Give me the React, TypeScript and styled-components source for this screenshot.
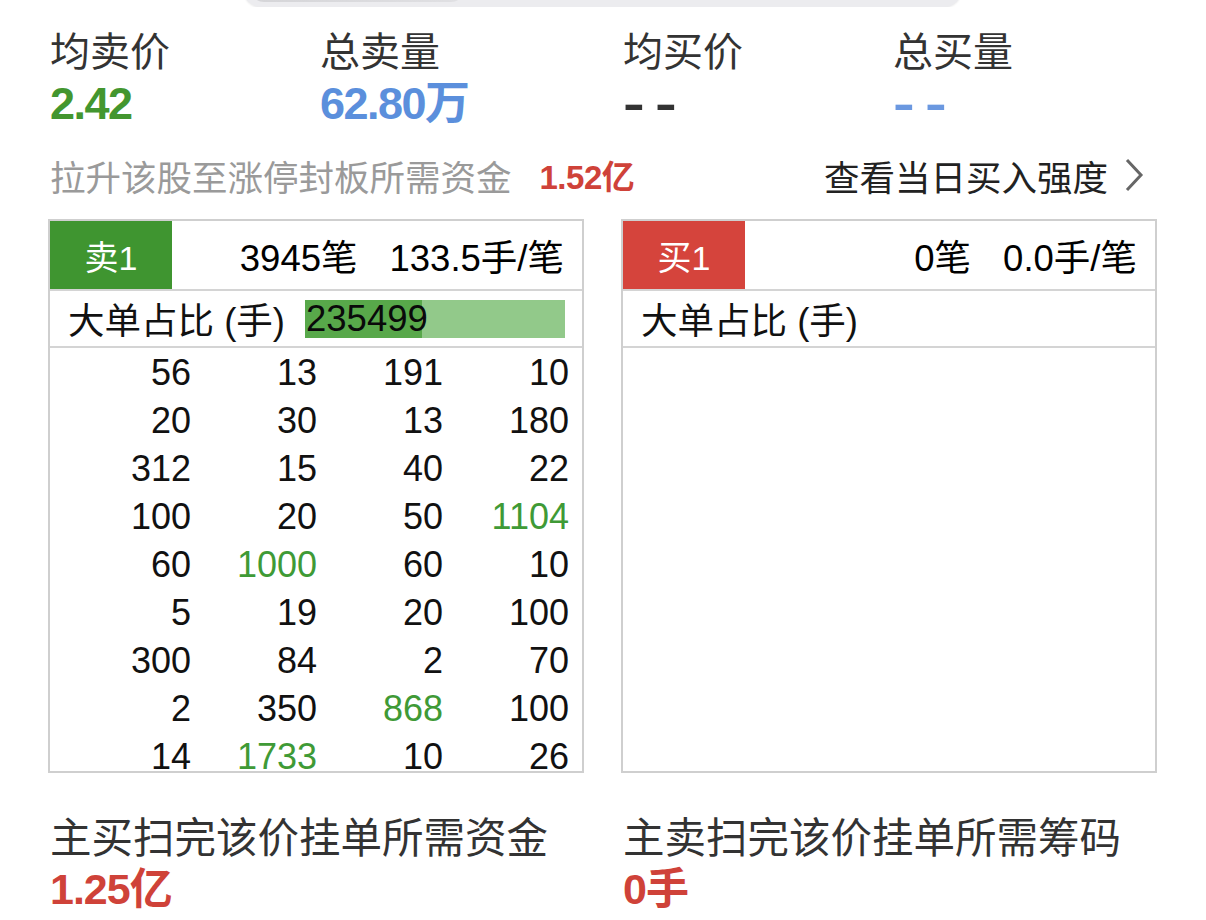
import React from "react";
import styled, { createGlobalStyle } from "styled-components";

const GlobalStyle = createGlobalStyle`
  html, body { margin: 0; padding: 0; background: #fff; }
  body {
    font-family: "Liberation Sans", "Noto Sans CJK SC", sans-serif;
    color: #111;
    overflow: hidden;
  }
  * { box-sizing: border-box; }
`;

const Page = styled.div`
  width: 1206px;
  height: 920px;
  padding: 0 48px;
  display: flex;
  flex-direction: column;
`;

const TabStrip = styled.div`
  height: 7px;
  display: flex;
  align-items: flex-end;
  overflow: hidden;
  padding-left: 195px;
`;

const TabPill = styled.div`
  width: 719px;
  height: 40px;
  flex-shrink: 0;
  border-radius: 18px;
  background: #ececef;
  box-shadow: 0 1px 2px rgba(0, 0, 0, 0.08);
  padding: 0 0 5px 7px;
  display: flex;
  align-items: flex-end;
`;

const TabActive = styled.div`
  width: 215px;
  height: 30px;
  border-radius: 14px;
  background: linear-gradient(90deg, #d5d5d8, #e0e0e3);
`;

const Halves = styled.div<{ $top?: number }>`
  display: grid;
  grid-template-columns: 536px 536px;
  column-gap: 37px;
  margin-top: ${(p) => p.$top ?? 0}px;
`;

const MetricPair = styled.div`
  display: grid;
  grid-template-columns: 270px 1fr;
  padding-left: 2px;
`;

const Metric = styled.div`
  display: flex;
  flex-direction: column;
`;

const MetricLabel = styled.div`
  font-family: "Noto Sans CJK SC", sans-serif;
  font-size: 40px;
  line-height: 48px;
  color: #333;
  margin-top: 18px;
`;

const MetricValue = styled.div<{ $color: string }>`
  font-family: "Liberation Sans", "Noto Sans CJK SC", sans-serif;
  font-weight: 700;
  font-size: 45px;
  line-height: 52px;
  letter-spacing: -1.5px;
  color: ${(p) => p.$color};
  margin-top: 5px;
  white-space: nowrap;
`;

const Dashes = styled.span`
  display: inline-block;
  letter-spacing: 7px;
  transform: scaleX(1.45);
  transform-origin: left center;
`;

const LiftRow = styled.div`
  display: flex;
  align-items: center;
  height: 50px;
  margin-top: 20px;
  padding-left: 2px;
`;

const LiftLabel = styled.span`
  font-family: "Noto Sans CJK SC", sans-serif;
  font-size: 35.5px;
  color: #9a9a9a;
`;

const LiftValue = styled.span`
  font-size: 33px;
  font-weight: 700;
  color: #cf4239;
  margin-left: 28px;
  letter-spacing: -0.5px;
`;

const StrengthLink = styled.span`
  margin-left: auto;
  margin-right: 14px;
  display: flex;
  align-items: center;
  gap: 16px;
  font-family: "Noto Sans CJK SC", sans-serif;
  font-size: 35.5px;
  color: #222;
`;

const Table = styled.div`
  height: 554px;
  border: 2px solid #cfcfcf;
  display: flex;
  flex-direction: column;
`;

const HeadRow = styled.div`
  height: 70px;
  border-bottom: 2px solid #d4d4d4;
  display: flex;
  align-items: stretch;
  flex-shrink: 0;
`;

const Badge = styled.div<{ $bg: string }>`
  width: 122px;
  background: ${(p) => p.$bg};
  color: #fff;
  font-size: 34px;
  display: flex;
  align-items: center;
  justify-content: center;
`;

const HeadStats = styled.div`
  flex: 1;
  display: flex;
  align-items: center;
  justify-content: flex-end;
  gap: 32px;
  padding-right: 18px;
  font-size: 36.5px;
  color: #000;
  white-space: nowrap;
`;

const BigRow = styled.div`
  height: 57px;
  border-bottom: 2px solid #d4d4d4;
  display: flex;
  align-items: center;
  padding: 0 17px 0 18px;
  flex-shrink: 0;
`;

const BigLabel = styled.span`
  font-size: 36.5px;
  color: #111;
  white-space: nowrap;
`;

const Bar = styled.div`
  margin-left: auto;
  width: 260px;
  height: 38px;
  background: #92c98a;
  position: relative;
  display: flex;
  align-items: center;
`;

const BarFill = styled.div`
  position: absolute;
  left: 0;
  top: 0;
  bottom: 0;
  background: #58a84a;
`;

const BarText = styled.span`
  position: relative;
  font-size: 36.5px;
  color: #0a0a0a;
  padding-left: 1px;
`;

const Grid = styled.div`
  flex: 1;
  padding: 1px 18px 0 15px;
  display: grid;
  grid-template-columns: repeat(4, 126px);
  grid-auto-rows: 48px;
  align-content: start;
`;

const Cell = styled.div<{ $green?: boolean }>`
  align-self: center;
  font-size: 36px;
  line-height: 30px;
  text-align: right;
  color: ${(p) => (p.$green ? "#3f9a36" : "#111")};
`;

const FootLabel = styled.div`
  font-family: "Noto Sans CJK SC", sans-serif;
  font-size: 41.5px;
  line-height: 48px;
  color: #333;
  padding-left: 2px;
`;

const FootValue = styled.div`
  font-size: 43px;
  font-weight: 700;
  line-height: 52px;
  color: #cf4239;
  padding-left: 2px;
  margin-top: 4px;
  letter-spacing: -1px;
`;

const Chevron = () => (
  <svg width="20" height="34" viewBox="0 0 20 34">
    <polyline points="3,2 17,17 3,32" fill="none" stroke="#666" strokeWidth="3" />
  </svg>
);

const rows: (string | [string, boolean])[][] = [
  ["56", "13", "191", "10"],
  ["20", "30", "13", "180"],
  ["312", "15", "40", "22"],
  ["100", "20", "50", ["1104", true]],
  ["60", ["1000", true], "60", "10"],
  ["5", "19", "20", "100"],
  ["300", "84", "2", "70"],
  ["2", "350", ["868", true], "100"],
  ["14", ["1733", true], "10", "26"],
];

export default function App() {
  return (
    <>
      <GlobalStyle />
      <Page>
        <TabStrip>
          <TabPill>
            <TabActive />
          </TabPill>
        </TabStrip>

        <Halves>
          <MetricPair>
            <Metric>
              <MetricLabel>均卖价</MetricLabel>
              <MetricValue $color="#43962f">2.42</MetricValue>
            </Metric>
            <Metric>
              <MetricLabel>总卖量</MetricLabel>
              <MetricValue $color="#5b8fdc">62.80万</MetricValue>
            </Metric>
          </MetricPair>
          <MetricPair>
            <Metric>
              <MetricLabel>均买价</MetricLabel>
              <MetricValue $color="#333">
                <Dashes>--</Dashes>
              </MetricValue>
            </Metric>
            <Metric>
              <MetricLabel>总买量</MetricLabel>
              <MetricValue $color="#6b98e0">
                <Dashes>--</Dashes>
              </MetricValue>
            </Metric>
          </MetricPair>
        </Halves>

        <LiftRow>
          <LiftLabel>拉升该股至涨停封板所需资金</LiftLabel>
          <LiftValue>1.52亿</LiftValue>
          <StrengthLink>
            查看当日买入强度
            <Chevron />
          </StrengthLink>
        </LiftRow>

        <Halves $top={19}>
          <Table>
            <HeadRow>
              <Badge $bg="#3f9530">卖1</Badge>
              <HeadStats>
                <span>3945笔</span>
                <span>133.5手/笔</span>
              </HeadStats>
            </HeadRow>
            <BigRow>
              <BigLabel>大单占比 (手)</BigLabel>
              <Bar>
                <BarFill style={{ width: "45%" }} />
                <BarText>235499</BarText>
              </Bar>
            </BigRow>
            <Grid>
              {rows.flatMap((r, i) =>
                r.map((c, j) =>
                  Array.isArray(c) ? (
                    <Cell key={`${i}-${j}`} $green>
                      {c[0]}
                    </Cell>
                  ) : (
                    <Cell key={`${i}-${j}`}>{c}</Cell>
                  )
                )
              )}
            </Grid>
          </Table>
          <Table>
            <HeadRow>
              <Badge $bg="#d5443c">买1</Badge>
              <HeadStats>
                <span>0笔</span>
                <span>0.0手/笔</span>
              </HeadStats>
            </HeadRow>
            <BigRow>
              <BigLabel>大单占比 (手)</BigLabel>
            </BigRow>
            <Grid />
          </Table>
        </Halves>

        <Halves $top={38}>
          <div>
            <FootLabel>主买扫完该价挂单所需资金</FootLabel>
            <FootValue>1.25亿</FootValue>
          </div>
          <div>
            <FootLabel>主卖扫完该价挂单所需筹码</FootLabel>
            <FootValue>0手</FootValue>
          </div>
        </Halves>
      </Page>
    </>
  );
}
